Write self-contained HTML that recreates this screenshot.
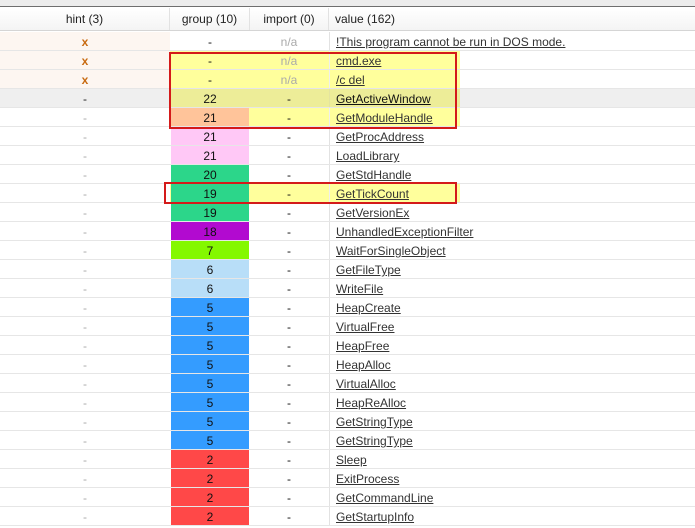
<!DOCTYPE html>
<html><head><meta charset="utf-8"><style>
*{margin:0;padding:0;box-sizing:border-box}
body{width:695px;height:526px;overflow:hidden;background:#fff;font-family:"Liberation Sans",sans-serif;font-size:12px;color:#222;position:relative}
.top{position:absolute;left:0;top:0;width:695px;height:7px;background:#ececec;border-bottom:1px solid #6e6e6e}
.hdr{position:absolute;left:0;top:8px;width:695px;height:23px;background:linear-gradient(#fff,#f4f4f4);border-bottom:1px solid #d5d5d5}
.hdr div{position:absolute;top:0;height:22px;line-height:23px;border-right:1px solid #e2e2e2;color:#222}
.r{position:absolute;left:0;width:695px;height:19px;border-bottom:1px solid #e6e6e6}
.r div{position:absolute;top:0;height:18px;line-height:21px}
.h{left:0;width:170px;text-align:center;color:#aaa}
.g{left:171px;width:78px;text-align:center;color:#111}
.i{left:250px;width:78px;text-align:center;color:#111}
.v{left:329px;width:366px;padding-left:6px;color:#333;text-decoration:underline;border-left:1px solid #e2e2e2}
.x{color:#c86a10;font-weight:bold}
.na{color:#aaa}
.box{position:absolute;border:2px solid #d41a1a}
</style></head><body>
<div class="top"></div>
<div class="hdr">
<div style="left:0;width:170px;text-align:center">hint (3)</div>
<div style="left:170px;width:80px;text-align:center">group (10)</div>
<div style="left:250px;width:79px;text-align:center">import (0)</div>
<div style="left:329px;width:366px;padding-left:6px;border:none">value (162)</div>
</div>

<div class="r" style="top:32px"><div class="h x" style="background:#fdf6f1">x</div><div class="g">-</div><div class="i na">n/a</div><div class="v">!This program cannot be run in DOS mode.</div></div>
<div class="r" style="top:51px"><div class="h x" style="background:#fdf6f1">x</div><div style="left:170px;width:290px;background:#ffff9c"></div><div class="g">-</div><div class="i na">n/a</div><div class="v" style="border-left-color:#eee">cmd.exe</div></div>
<div class="r" style="top:70px"><div class="h x" style="background:#fdf6f1">x</div><div style="left:170px;width:290px;background:#ffff9c"></div><div class="g">-</div><div class="i na">n/a</div><div class="v" style="border-left-color:#eee">/c del </div></div>
<div class="r" style="top:89px;background:#efefef"><div class="h" style="color:#222">-</div><div style="left:170px;width:290px;background:#eded98"></div><div class="g">22</div><div class="i">-</div><div class="v" style="color:#111;border-left-color:#e4e4a0">GetActiveWindow</div></div>
<div class="r" style="top:108px"><div class="h">-</div><div style="left:170px;width:290px;background:#ffff9c"></div><div class="g" style="background:#ffc49a">21</div><div class="i">-</div><div class="v" style="border-left-color:#eee">GetModuleHandle</div></div>
<div class="r" style="top:127px"><div class="h">-</div><div class="g" style="background:#ffc8f6">21</div><div class="i">-</div><div class="v">GetProcAddress</div></div>
<div class="r" style="top:146px"><div class="h">-</div><div class="g" style="background:#ffc8f6">21</div><div class="i">-</div><div class="v">LoadLibrary</div></div>
<div class="r" style="top:165px"><div class="h">-</div><div class="g" style="background:#2cd68a">20</div><div class="i">-</div><div class="v">GetStdHandle</div></div>
<div class="r" style="top:184px"><div class="h">-</div><div style="left:170px;width:290px;background:#ffff9c"></div><div class="g" style="background:#2cd68a">19</div><div class="i">-</div><div class="v" style="border-left-color:#eee">GetTickCount</div></div>
<div class="r" style="top:203px"><div class="h">-</div><div class="g" style="background:#2cd68a">19</div><div class="i">-</div><div class="v">GetVersionEx</div></div>
<div class="r" style="top:222px"><div class="h">-</div><div class="g" style="background:#b20ad0">18</div><div class="i">-</div><div class="v">UnhandledExceptionFilter</div></div>
<div class="r" style="top:241px"><div class="h">-</div><div class="g" style="background:#84f800">7</div><div class="i">-</div><div class="v">WaitForSingleObject</div></div>
<div class="r" style="top:260px"><div class="h">-</div><div class="g" style="background:#b8def8">6</div><div class="i">-</div><div class="v">GetFileType</div></div>
<div class="r" style="top:279px"><div class="h">-</div><div class="g" style="background:#b8def8">6</div><div class="i">-</div><div class="v">WriteFile</div></div>
<div class="r" style="top:298px"><div class="h">-</div><div class="g" style="background:#349cff">5</div><div class="i">-</div><div class="v">HeapCreate</div></div>
<div class="r" style="top:317px"><div class="h">-</div><div class="g" style="background:#349cff">5</div><div class="i">-</div><div class="v">VirtualFree</div></div>
<div class="r" style="top:336px"><div class="h">-</div><div class="g" style="background:#349cff">5</div><div class="i">-</div><div class="v">HeapFree</div></div>
<div class="r" style="top:355px"><div class="h">-</div><div class="g" style="background:#349cff">5</div><div class="i">-</div><div class="v">HeapAlloc</div></div>
<div class="r" style="top:374px"><div class="h">-</div><div class="g" style="background:#349cff">5</div><div class="i">-</div><div class="v">VirtualAlloc</div></div>
<div class="r" style="top:393px"><div class="h">-</div><div class="g" style="background:#349cff">5</div><div class="i">-</div><div class="v">HeapReAlloc</div></div>
<div class="r" style="top:412px"><div class="h">-</div><div class="g" style="background:#349cff">5</div><div class="i">-</div><div class="v">GetStringType</div></div>
<div class="r" style="top:431px"><div class="h">-</div><div class="g" style="background:#349cff">5</div><div class="i">-</div><div class="v">GetStringType</div></div>
<div class="r" style="top:450px"><div class="h">-</div><div class="g" style="background:#ff4848">2</div><div class="i">-</div><div class="v">Sleep</div></div>
<div class="r" style="top:469px"><div class="h">-</div><div class="g" style="background:#ff4848">2</div><div class="i">-</div><div class="v">ExitProcess</div></div>
<div class="r" style="top:488px"><div class="h">-</div><div class="g" style="background:#ff4848">2</div><div class="i">-</div><div class="v">GetCommandLine</div></div>
<div class="r" style="top:507px"><div class="h">-</div><div class="g" style="background:#ff4848">2</div><div class="i">-</div><div class="v">GetStartupInfo</div></div>

<div class="box" style="left:169px;top:52px;width:288px;height:77px"></div>
<div class="box" style="left:164px;top:182px;width:293px;height:22px"></div>
</body></html>
